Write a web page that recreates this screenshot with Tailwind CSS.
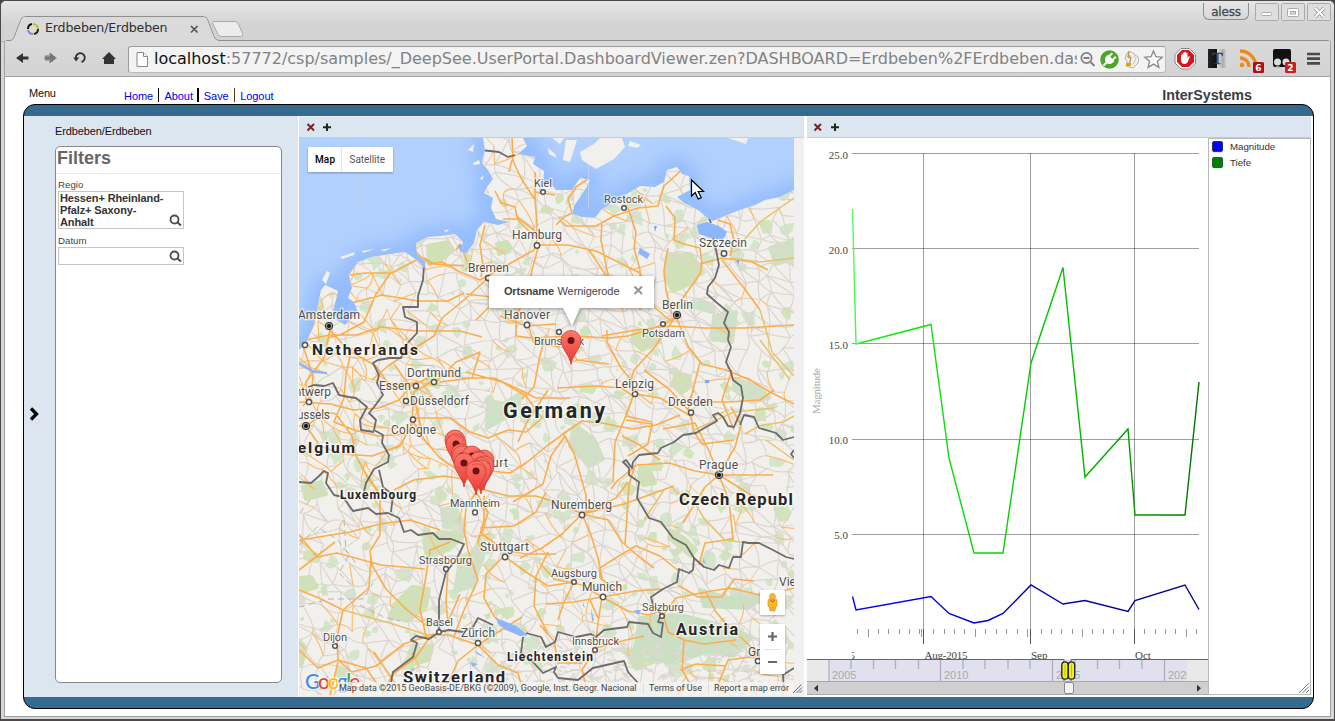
<!DOCTYPE html>
<html lang="de">
<head>
<meta charset="utf-8">
<title>Erdbeben/Erdbeben</title>
<script src="https://cdn.jsdelivr.net/npm/@tailwindcss/browser@4"></script>
</head>
<body class="w-[1335px] h-[721px] overflow-hidden bg-[#444]">
<div class="w-[1335px] h-[721px] flex flex-col bg-[#d6d6d6] border-t border-l border-r border-b-2 border-[#4b4949] rounded-t-md overflow-hidden font-['Liberation_Sans',sans-serif]">
  <!-- title bar with tab -->
  <header class="h-[40px] shrink-0 bg-linear-to-b from-[#e6e6e6] to-[#d3d3d3] to-60% flex justify-between relative">
    <svg class="absolute left-0 top-0" width="1333" height="41" viewBox="1 1 1333 41" fill="none">
      <path d="M1 42h4q0-1.500 2-1.500h3q3 0 4-3l6.500-17q1-4 5-4H203q4 0 5 4l6 16q1.500 4 5 4H1327q4 0 4 3" fill="none" stroke="#8f8f8f"/>
      <path d="M7 42q5 0 7-3l7-18q1-4 4-4H203q3 0 4 3l7 18q2 3 5 3.500z" fill="#dadada"/>
      <path d="M213.500 21.500h21q3 0 4 2.500l4 9.500q1 3-2 3h-19q-3 0-4-3l-4.500-9.500q-1-2.500 .5-2.500z" fill="#ececec" stroke="#a9a9a9"/>
    </svg>
    <div class="relative flex items-center pl-[25px] pt-[15px] h-[40px]">
      <svg width="14" height="14" viewBox="0 0 14 14" fill="none" stroke-width="2"><path d="M7 2A5 5 0 0 1 12 7" stroke="#a7c727"/><path d="M12 7A5 5 0 0 1 8 12" stroke="#222"/><path d="M7 12A5 5 0 0 1 2 8" stroke="#8484c4"/><path d="M2 7A5 5 0 0 1 6 2" stroke="#111"/><circle cx="7" cy="7" r="1.500" fill="#f8df8a"/></svg>
      <span class="ml-[5px] w-[142px] font-['DejaVu_Sans'] text-[12.600px] tracking-[-0.150px] leading-none text-[#2f2f2f] whitespace-nowrap">Erdbeben/Erdbeben</span>
      <svg class="ml-[3px] mt-[1px]" width="9" height="9" viewBox="0 0 9 9"><path d="M1 1l6.500 6.500M7.500 1L1 7.500" stroke="#555" stroke-width="1.700"/></svg>
    </div>
    <div class="relative flex items-start pr-[1px] pt-[2px]">
      <div class="w-[46px] h-[17px] mr-[6px] border border-t-0 border-[#8e8e8e] rounded-b-md text-center text-[12px] leading-[18px] text-[#4a4a4a] [-webkit-text-stroke:0.300px_#4a4a4a] font-['DejaVu_Sans'] tracking-[-0.200px]">aless</div>
      <svg width="78" height="19" viewBox="0 0 78 19" fill="#dedede" stroke="#aaa"><rect x=".5" y=".5" width="23" height="17" rx="1"/><rect x="26.500" y=".5" width="23" height="17" rx="1"/><rect x="52.500" y=".5" width="23" height="17" rx="1"/><rect x="6.500" y="9.500" width="10" height="3" rx="1" fill="#fff"/><rect x="32.500" y="5.500" width="11" height="8" rx="1" fill="#fff"/><rect x="35.500" y="8.500" width="5" height="2.500" fill="#ddd"/><path d="M60 5l9 9M69 5l-9 9" stroke="#999" stroke-width="3.600"/><path d="M60 5l9 9M69 5l-9 9" stroke="#fff" stroke-width="1.800"/></svg>
    </div>
  </header>
  <!-- toolbar -->
  <div class="h-[36px] shrink-0 ml-[3px] mr-[3px] border-l border-r border-b border-[#a3a3a3] bg-linear-to-b from-[#dadada] to-[#d3d3d3] flex items-center relative">
    <svg width="124" height="35" viewBox="5 41 124 35" fill="#333">
      <path d="M16 58l7-5v3.500h5.500v3H23V63z"/>
      <g fill="#8b8b8b"><path d="M57 58l-7-5v3.500h-5.500v3H50V63z"/></g><path d="M46 55v6M48 55v6M50 53v10M52 54v8M54 56v4" stroke="#555" stroke-width=".8"/>
      <path d="M76 59A4.500 4.500 0 1 1 81.500 62" fill="none" stroke="#333" stroke-width="1.900"/><path d="M73.300 57.500h6L76 61.500z"/>
      <path d="M102 59l7-7 7 7h-2v5h-10v-5z"/>
    </svg>
    <div class="w-[1038px] h-[27px] ml-[-1px] mt-[1px] border border-[#9b9b9b] border-b-[#bbb] border-r-[#bbb] rounded-[3px] bg-[#f3f3f3] flex items-center">
      <svg class="ml-[7px] shrink-0" width="13" height="17" viewBox="0 0 13 17" fill="#fff" stroke="#888"><path d="M1 1.500h6.500l4 4v10H1z"/><path d="M7.500 1.500v4h4"/></svg>
      <div class="ml-[5px] w-[923px] shrink-0 overflow-hidden whitespace-nowrap font-['DejaVu_Sans'] text-[16px] tracking-[-0.013px] leading-[24px] text-[#828282]"><span class="text-[#111]">localhost</span>:57772/csp/samples/_DeepSee.UserPortal.DashboardViewer.zen?DASHBOARD=Erdbeben%2FErdbeben.dashboard</div>
      <svg class="shrink-0" width="88" height="24" viewBox="1077 46 88 24" fill="none">
        <circle cx="1086.500" cy="57" r="5.200" stroke="#808080" stroke-width="1.700"/><path d="M1083.500 57h6M1090.500 61l4 4" stroke="#808080" stroke-width="1.900"/>
        <circle cx="1109.500" cy="58.500" r="9.300" fill="#4fa52a"/><g transform="rotate(45 1109.500 58.500)" fill="#fff"><path d="M1105 56h9v3a4.500 4 0 0 1-9 0zM1106 52h2v4h-2zM1111 52h2v4h-2zM1108.500 62h2v5h-2z"/></g>
        <path d="M1127 52q5-3 8 2 5 2 3 8l-5 5-7-2q3-5-1-7z" fill="#f2f0ec" stroke="#b4b0aa"/><path d="M1129 50l-1 6 3 1-2 7" stroke="#b98a44" stroke-width="1.200"/><path d="M1133 55q4 0 2 5l-3 4" stroke="#c9c4bb"/><path d="M1129 54l2 1-2 2zM1126 62h5v3h-5z" fill="#e9a500"/>
        <path d="M1153.500 50l2.400 5.700 6.300.5-4.800 4 1.500 6.200-5.400-3.300-5.400 3.300 1.500-6.200-4.800-4 6.300-.5z" fill="#fbfbfb" stroke="#888" stroke-width="1.300"/>
      </svg>
    </div>
    <svg class="shrink-0" width="160" height="35" viewBox="1166 41 160 35" fill="none">
      <path d="M1181 48.500h8.500l6 6v8.500l-6 6h-8.500l-6-6v-8.500z" fill="#fff" stroke="#888"/><path d="M1182 50h7l5 5v7l-5 5h-7l-5-5v-7z" fill="#d5161c"/><path d="M1181 59v-4q1-1 1.500 0v-2q1-1 1.700 0v-1q1-1 1.700 0v1q1-1 1.600 0v5l1.500-2q1 0 .7 1l-2 5q-1 2-3 2-3 0-3.700-3z" fill="#fff"/>
      <rect x="1208" y="49" width="19" height="19" fill="url(#tg)"/><text x="1217.500" y="64" text-anchor="middle" font-family="Liberation Serif" font-size="17" fill="#666" stroke="#333" stroke-width=".5">T</text>
      <g stroke="#ed8a15" stroke-width="3.300"><path d="M1240 58a9 9 0 0 1 9 9M1240 51a16 16 0 0 1 16 16"/></g><circle cx="1242" cy="65" r="2.300" fill="#ed8a15"/>
      <rect x="1273" y="49" width="18" height="18" rx="2" fill="#111"/><circle cx="1277.500" cy="62" r="3.500" fill="#ddd"/><circle cx="1286" cy="62" r="3.500" fill="#ddd"/><path d="M1274 68q4-4 7 0" fill="#bbb"/>
      <rect x="1253" y="62" width="11" height="11" rx="1.500" fill="#b30d18"/><rect x="1285" y="62" width="11" height="11" rx="1.500" fill="#c82020"/>
      <g font-family="DejaVu Sans" font-weight="bold" font-size="9" fill="#fff" text-anchor="middle"><text x="1258.500" y="71">6</text><text x="1290.500" y="71">2</text></g>
      <path d="M1307 54h13M1307 58.700h13M1307 63.400h13" stroke="#4a4a4a" stroke-width="2.700"/>
      <defs><linearGradient id="tg"><stop offset="0" stop-color="#222"/><stop offset=".45" stop-color="#111"/><stop offset=".5" stop-color="#ddd"/><stop offset=".8" stop-color="#aaa"/><stop offset="1" stop-color="#ddd"/></linearGradient></defs>
    </svg>
  </div>
  <!-- page -->
  <main class="flex-1 mx-[3px] mb-[2px] border-x border-b border-[#a0a0a0] bg-white pl-[18px] pr-[16px] flex flex-col">
    <nav class="h-[27px] shrink-0 flex relative">
      <span class="pl-[6px] pt-[10px] w-[101px] text-[11px] leading-[13px] text-[#111] tracking-[-0.200px]">Menu</span>
      <div class="pt-[9px] flex text-[11px] leading-[20px] tracking-[-0.050px] text-[#0000ee] whitespace-nowrap">
        <span class="w-[34px]">Home</span><i class="w-[1.400px] h-[14px] mt-[2px] mr-[5px] bg-black"></i>
        <span class="w-[33px]">About</span><i class="w-[1.400px] h-[14px] mt-[2px] mr-[5px] bg-black"></i>
        <span class="w-[30px]">Save</span><i class="w-[1.400px] h-[14px] mt-[2px] mr-[5px] bg-[#631]"></i>
        <span>Logout</span>
      </div>
      <span class="ml-auto mr-[62px] pt-[10px] text-[14.300px] leading-[17px] font-bold text-[#3c3c46]">InterSystems</span>
    </nav>
    <section class="w-[1291px] h-[605px] shrink-0 rounded-xl border border-black bg-[#356b8e] pt-[11px] pb-[12px] flex flex-col overflow-hidden">
      <div class="flex-1 flex bg-[#dce6f1]">
        <!-- filters -->
        <aside class="w-[275px] h-[581px] shrink-0 flex border-r border-white">
          <div class="w-[31px] flex items-center pt-[15px] pl-[5px]"><svg width="11" height="14" viewBox="0 0 11 14"><path d="M2 1.500l5.500 5.500L2 12.500" fill="none" stroke="#000" stroke-width="3.300"/></svg></div>
          <div class="w-[227px] flex flex-col">
            <h1 class="h-[30px] pt-[9px] text-[11px] leading-[13px] tracking-[-0.120px] text-[#111]">Erdbeben/Erdbeben</h1>
            <div class="h-[537px] bg-white border border-[#888] rounded-[5px] text-[#444]">
              <h2 class="h-[27px] pl-[1px] border-b border-[#e8e8e8] text-[18px] leading-[23px] font-bold text-[#666]">Filters</h2>
              <p class="ml-[2px] mt-[5px] h-[12px] text-[9.700px] leading-[12px] whitespace-nowrap">Regio</p>
              <div class="ml-[2px] mt-0 w-[126px] h-[38px] border border-[#c6c6c6] flex justify-between items-end">
                <p class="pl-px w-[112px] h-[36px] text-[11px] leading-[12px] tracking-[-0.120px] font-bold text-[#333] whitespace-nowrap">Hessen+ Rheinland-<br>Pfalz+ Saxony-<br>Anhalt</p>
                <svg class="shrink-0 mr-[1px] mb-[1px] -ml-[8px]" width="13" height="13" viewBox="0 0 13 13" fill="none" stroke="#4c4c4c"><circle cx="5.500" cy="5.500" r="4" stroke-width="1.800"/><path d="M8.500 8.500l3.500 3" stroke-width="2"/></svg>
              </div>
              <p class="ml-[2px] mt-[6px] h-[12px] text-[9.700px] leading-[12px]">Datum</p>
              <div class="ml-[2px] w-[126px] h-[18px] border border-[#c6c6c6] flex justify-end items-center">
                <svg class="mr-[1px]" width="13" height="13" viewBox="0 0 13 13" fill="none" stroke="#4c4c4c"><circle cx="5.500" cy="5.500" r="4" stroke-width="1.800"/><path d="M8.500 8.500l3.500 3" stroke-width="2"/></svg>
              </div>
            </div>
          </div>
        </aside>
        <!-- map -->
        <section class="w-[505px] h-[581px] shrink-0 flex flex-col bg-[#f0f0f0]">
          <div class="h-[22px] shrink-0 bg-[#dce6f1] border-t border-t-[#eee] border-b border-b-[#c9cdd2] flex items-center pl-[7px]">
            <svg width="26" height="10" viewBox="0 0 26 10"><path d="M1.500 2l6.500 6.500M8 2L1.500 8.500" stroke="#7d2020" stroke-width="2"/><path d="M17 5.300h8M21 1.500v7.500" stroke="#1b2b14" stroke-width="2"/></svg>
          </div>
          <svg id="map" class="block shrink-0" width="505" height="557" viewBox="299 138 505 557">
            <defs>
              <path id="land" d="M299 350L306 343 314 325 318 305 321 290 325 285 332 288 338 291 336 300 333 310 337 320 345 325 352 318 358 312 354 302 348 298 352 288 349 275 358 262 372 257 390 254 405 252 417 260 424 268 426 262 417 254 416 243 428 237 440 236 455 234 463 242 462 252 466 254 474 243 477 230 484 222 498 225 510 222 496 219 491 208 493 198 484 193 487 187 493 179 488 170 482 163 485 150 483 138 523 138 527 146 518 154 535 157 533 164 544 171 543 184 549 182 556 190 572 190 580 178 590 180 586 188 574 206 572 214 582 217 595 218 601 210 622 197 640 186 655 187 664 182 667 170 677 167 682 174 689 176 690 190 677 197 684 203 698 210 706 217 713 221 722 217 740 210 755 205 765 200 780 197 794 190V695H299z"/>
              <clipPath id="lc"><use href="#land"/></clipPath>
              <clipPath id="mc"><rect x="299" y="138" width="495" height="557"/></clipPath>
              <filter id="soft" x="-5%" y="-5%" width="110%" height="110%"><feGaussianBlur stdDeviation="9"/></filter>
              <filter id="tile"><feGaussianBlur stdDeviation=".45"/></filter>
              <linearGradient id="pin" x2="0" y2="1"><stop offset="0" stop-color="#ff776b"/><stop offset="1" stop-color="#e8382f"/></linearGradient>
              <g id="mk"><path d="M0 0C-1-9-10-16-10-24A10 10 0 0 1 10-24C10-16 1-9 0 0z" fill="url(#pin)" stroke="#c5413a" stroke-width=".8"/><circle cy="-24" r="3.500" fill="#6b1410"/></g>
            </defs>
            <g clip-path="url(#mc)">
            <rect x="299" y="138" width="495" height="557" fill="#b1d0fe"/>
            <use href="#land" fill="none" stroke="#7faefb" stroke-width="20" opacity=".6" filter="url(#soft)"/>
            <path d="M358.500 138v70M588.500 138v70" stroke="#bdd2ee"/>
            <use href="#land" fill="#f2f0ec"/>
            <g fill="#f2f0ec">
              <path d="M580 152l14-8 6-6h22l3 9-11 12-18 10-14-9zM563 160l3-20h11l-7 22zM548 148l7 6 2 4-8-4zM630 141l11 4-4 3-9-2zM728 138h20l-2 6zM322 280l5-9 3 2-4 11zM340 257l15-5-1 3-12 4zM362 251l12-2-11 4zM380 250l11-2-6 3zM468 150l6-6-1 8zM473 163l6-3 1 4-6 1zM480 178l4-2-2 4zM421 234l11-2M443 231l6-2-2 3zM552 138h12l-4 6z"/>
            </g>
            <g clip-path="url(#lc)"><g filter="url(#tile)">
              <g id="woods"></g>
              <g fill="#cfe2b4" stroke="#cfe2b4" stroke-width="4" stroke-linejoin="round">
                <path d="M667 256l24-2 8 12-4 16-22 9-8-14zM634 331l18 3 8 8-18 8-10-9zM677 373l12 3 2 10-9 7-10-8zM640 467l10 4 5 12-12 2-4-8zM670 530l14 8 12 12-5 6-22-18zM394 605l18-18 17 2-3 18-18 14-18-4zM424 540l16-8 24 3-14 14-23 8zM299 578l12-1 6 10-14 4zM303 487l18-5 5 12-20 5zM428 246l20-4 5 8-12 10-12 4zM497 244l10-2 4 6-12 6zM299 640l7 8-5 18zM624 649l20 2 14-6-2 16-20 8zM410 652l22-6-4 14-14 4z"/>
              </g>
              <g fill="#cfe2c6" stroke="#cfe2c6" stroke-width="4" stroke-linejoin="round">
                <path d="M735 379l24 8 10 11-18 4-18-13zM574 425l20 14 9 20-13 7-20-20zM488 400l15 4 20-12-8 20-28 16zM460 560l14-8 6-15 3 20-10 28-18 7zM714 316l22-4-4 30-20-3zM770 248l24-8v18l-18 6zM700 300l10 4 3 8-16-4zM590 280l18-4 8 10-18 6zM442 510l14-4 4 15-16 6z"/>
                <path d="M640 618l40-3 40 10 32 12-18 18-32-2-28 10-40-8zM700 590l28 8 40-4-20 14-44-2z" fill="#c9e0c2" stroke="#c9e0c2"/>
              </g>
              <g id="relief" stroke="#dcdbd6" stroke-width="2" fill="none"></g>
              <g id="minor" fill="none" stroke="#dcd6ce" stroke-width="1.200"></g>
              <g id="local" fill="none" stroke="#fdbb66" stroke-width="1.100"></g>
              <g fill="none" stroke="#fcad4d" stroke-width="1.600" stroke-linejoin="round">
                <path d="M512 138l1 23 8 17 14 22 2 24 0 16-3 10-32 18-22 12-20-8-18-10-12 2-12-10-7-8M512 160l-3 12M495 191l6 12 14 4 2 10 18 14M503 219l14 0 18 18M485 225l-5 20 3 20-2 12M456 250l4-6 9 22-4 4"/>
                <path d="M535 200v-28M535 192l20 3M556 225l8-8 8-4-4-14 8-12 12-8M560 220l6 6 30 0 18-10 24-8 20-2 6-20 20-18M615 140l2 14-20 10-8 4M610 155l7 18M538 245l30 0 28 6 24 12 20 10 8 18 4 14 16 14 8 0M628 208l8 24-2 16 6 22 0 40M666 206l9 12-1 22 10 4 16 4 2 16-2 10-20 28M602 222l-1 18 8 40-20-30M700 264l22-6 30 4 16 8M722 260l22 28 16 22"/>
                <path d="M718 220l12 4 4 16-4 16M668 248l-4 22 2 20 6 24M538 248l-6 22-4 24-12 22 0 20 16 2 40-2 36 2 20-2 26-8 18-8M500 316l26 10 30-2M488 278l-24 22-22 18-8 18-16 10-30 20-16 14M466 294l34 4 30-12M488 280l8 20-20 20M296 315l32 4 24-16 30-8 36 6 30 0 16-8M350 275l16-2 26 0 26-14M424 258l10 6 30 2M390 274l-14 20-12 28-22 12-14 4M300 341l30-6 26 0 26-8 34 4 44 0 22 6"/>
                <path d="M315 322l-12 24 10 30-2 20-8 10M330 330l-6 28-18 24 0 18M330 330l18 20 28 16 14 20 30-4 16-8 28 4 30 0 22 10 20 10 34 0M352 348l-6 26-2 24-10 24 20 8 24 6 30-2M299 402l32 2 22 6 26-2 20-8 14-16M306 426l20-14 10 2 16 22 4 20 10 18 14 20M306 426l14 20 22 8 30 2 28-10 12-22M394 364l14 20 8 22 4 20M434 380l-20 12-2 28 14 22 14 16 24 16 14 8M436 382l20-20 24-10-8 26-32 4M416 418l34 0 20 14 18 6 20-8 18 2 16-14-16-22-24-14-36-10"/>
                <path d="M546 335l-6 20-6 32-12 12M571 350l6 10 32 4M528 325l6 18 26 4M607 330l0 12 14 26 12 14M602 336l34-6 34-4 34 2 40 0 50-3M557 388l40-2 24 2 12 8-8 22-10 24-2 40M636 394l24 4 24 14 6 4M634 394l-8 22 26 6M548 445l14-10 20-14 20 2 30 6 24-4 24-10M548 445l-22 18-16 10-20-2M564 435l10 18 12 42 0 16M565 436l-14 20-8 28-30 18M548 390l-20 30-10 22M626 420l26 4-4 20-20 12M690 412l4 20 8 12 32-4M690 412l-20-22-26-20M676 316l12 30 12 16-6 24-6 24M676 316l-22 32-20 22-4 14M688 346l14 18 24 6 24 10 20 12 24 12M694 390l-6 12 40 0 32-2 14-10M732 370l-10 30 12 30"/>
                <path d="M719 475l-24-4-26-8-32 2-20 16-6 8M719 475l-14 12-22 36M719 475l54 0M719 475l16-28 6-22-10-18M719 475l-10-24-14-28-32 6M719 475l10 26 4 38-28 4-6 22M719 475l32 20 26 8M660 460l-22-16-16-8M582 514l-20-10-26-8-28 0-30-8M582 514l8 18 8 26 4 20M582 514l26 6 14 22 16 14 16 12M582 514l34-16 12-16M582 514l-20 20-20 14-22 10M582 514l42-10 50-18M625 545l4-60 6-20M600 578l0-10 22-14 14-8 24 10 20 16"/>
                <path d="M476 492l-10 16-2 22 4 20 10 30-14 30-10 26M476 492l12 20-6 22 22 16 22 4 30 0M484 496l0 24-6 22 4 8M504 556l-18 18-2 24 10 18 12 14M504 556l22 16 22 14 26-4M546 492l-10 20-22 14-34 2M470 480l-26-4-30 4-20 10M440 530l-30-10-30 4-30 8-50 8M380 535l0-40-14-20M380 535l-10 16 2 14 14 24 20 20 22 18M299 535l18 22 20-4 44 12 44 4M299 570l18-14 18-14M343 610l-24-12-20-8M343 610l26-22 2-32M343 610l-6 28 1 22 14 12 24-6 28-22 30-10M338 660l-20 8-19-18M338 660l28 8 14 20M338 662l-8 33M374 652l20 30 10 13M426 636l-6-26 6-34 4-26 20-8M448 568l-2 34 2 20 12-28M478 645l-30-10-20 0M478 645l-20 16-12 26M478 645l28-18 16-10M430 637l-14 20-24 18-10 20M478 645l20 20 20 8 6 22"/>
                <path d="M548 552l-12 24-2 30 14 28M574 582l-10 20-6 18M602 597l-20-12-28-6-14-16M602 597l-4 26-2 18M602 597l26 14 20 4 14-4M602 597l34-6 26-2M602 597l-28 5-28 2M600 578l16 12M590 600l8 18M662 610l6 22 16 8-2 30 8 14-14 11M664 614l12-16 30-6 24-4 34 8 30-8M678 585l20 12 24 0 12-18 20 2M684 640l20 4 32-4M706 592l10 20 12 14 20 18 12 12M596 648l30-8 18-4M596 648l-14 22 6 25M758 656l-30 4-12 30M540 625l14 16 4 22 24 0M680 670l16-6 30 2"/>
              </g>
              <g fill="none" stroke="#e7c36a" stroke-width="1.500"><path d="M744 240l16-18 34-24M730 258l30 4 34-4M760 310l6 20 6 22 22 24M745 434l14-8 24-4 11-6M766 440l28 20M694 430l40-18 40-4M760 340l30 40M299 540l22 18M343 610l50 14 44 14M687 490l18 30 20 20 30 4M664 490l-20 30"/></g>
              <g fill="none" stroke="#6c6c6c" stroke-width="1.800" stroke-linejoin="round">
                <!-- north and west -->
                <path d="M481 150L499 152 508 157 515 155M424 265L423 280 418 296 418 307 403 307 405 317 417 322 417 333 406 345 401 358 390 358 378 360 373 363 379 375 377 383 383 395 374 407 369 413 376 420 374 430 383 435 382 443 389 455 388 462 374 469 366 483 364 492M308 387L314 385 324 386 333 383 339 395 349 397 356 398 367 407 360 420 361 430 374 432"/>
                <path d="M379 470L383 487 393 495 391 512M299 482L311 483 318 477 324 471 328 473 326 483 334 495 343 497 353 511 368 508 376 514 388 513 399 518 404 532 411 530 418 535 433 533 439 539 451 539 464 544 456 560 446 572 439 600 439 617 439 632 429 639 416 636 411 640 417 643 413 657 393 672 391 682"/>
                <!-- alps -->
                <path d="M439 632L449 630 463 632 473 627 478 618 493 625M523 637L521 653 533 662 543 673 556 667 554 672 558 678 578 680 593 668 624 661 628 672 638 683M526 633L541 637 546 647 555 642 558 632 576 637 591 634 596 637 604 630 627 627 629 622 648 624 653 633 661 637 663 623 658 622 661 614 653 605 651 597 663 589 677 582 679 569 689 573 693 570 694 558M794 668L783 675 784 690"/>
                <!-- east -->
                <path d="M709 218L711 223M712 234L716 250 719 265 715 278 708 287 707 294 716 302 728 312 724 323 729 332 728 340 731 347 726 362 731 372 733 380 741 386 743 398 740 413 734 427 728 426 723 417 718 413 713 415 717 421 706 427 696 433 683 435 674 442 661 448 658 453 639 455 633 462 632 468 626 460 623 462 629 468 629 475 639 482 637 498 649 518 661 522 673 538 686 545 694 558 704 567 714 570 719 565 729 568 733 557 741 557 743 542 749 543 759 543 773 550 786 557 794 559M740 425L744 415 754 417 759 428 776 433 783 440 794 437M794 450L791 454 794 458"/>
                <path d="M299 545l18-18 20 12 12 16-10 18 14 14M299 607l30-8 34 0 10-16M360 605l24 12 16 4M320 690l10-18M344 520l2 30 12 16M310 500l-11 14" stroke="#b5b5b2" stroke-dasharray="6 4" stroke-width="1"/>
              </g>
              <g fill="#8bb6fc"><path d="M496 618l8 3 12 5 12 9-8 1-14-6-8-6zM409 671l5-4-2 6zM474 650l12 8-9-4zM470 662l8 2-5 3zM697 225l10-3 12 4 8 6-4 8-12-2-12-4zM640 248l10 6-3 5-9-6zM591 608l3 12 -2 2zM583 602l2 6-2-2zM634 610h7l-3 5zM703 558l3 6-3-2zM458 246l5-2 7-1-3 10-6-1zM299 362l14 8 14 2v2l-14-1-14-8z"/></g>
              <path d="M736 261l3-1v5zM654 226l3 0-2 6zM705 380h4v3h-4zM360 365l6 0M299 365l20 10" fill="#75a9fb"/>
            </g></g>
            <g fill="#fff" stroke="#555" stroke-width="1.500">
              <circle cx="543" cy="192" r="2.300"/><circle cx="624" cy="208" r="2.300"/><circle cx="537" cy="245.500" r="2.700"/><circle cx="724" cy="253.500" r="2.700"/><circle cx="488" cy="278" r="2.500"/><circle cx="527" cy="325" r="2.700"/><circle cx="559" cy="332" r="2.400"/><circle cx="663" cy="324" r="2.300"/><circle cx="305" cy="345" r="2.600"/><circle cx="434" cy="382" r="2.600"/><circle cx="416" cy="386" r="2.600"/><circle cx="406" cy="401" r="2.600"/><circle cx="413" cy="419.500" r="2.600"/><circle cx="309" cy="402" r="2.600"/><circle cx="635" cy="394" r="2.600"/><circle cx="691" cy="412.500" r="2.600"/><circle cx="582" cy="515" r="2.700"/><circle cx="475" cy="512.500" r="2.400"/><circle cx="505" cy="557" r="2.700"/><circle cx="446" cy="569" r="2.400"/><circle cx="574" cy="582" r="2.300"/><circle cx="603" cy="597" r="2.700"/><circle cx="662" cy="616" r="2.300"/><circle cx="439" cy="632" r="2.300"/><circle cx="478" cy="643" r="2.600"/><circle cx="335" cy="646" r="2.300"/><circle cx="595" cy="650" r="2.300"/><circle cx="758" cy="661" r="2.600"/>
              <g stroke="#333" stroke-width="1" fill="#999"><circle cx="329" cy="326" r="3.700"/><circle cx="306" cy="426" r="3.700"/><circle cx="677" cy="315" r="3.700"/><circle cx="719" cy="475" r="3.700"/></g>
              <g stroke="none" fill="#111"><circle cx="329" cy="326" r="2"/><circle cx="306" cy="426" r="2"/><circle cx="677" cy="315" r="2"/><circle cx="719" cy="475" r="2"/></g>
            </g>
            <g font-family="Roboto" font-size="12" fill="#505050" stroke="#fff" stroke-width="2.500" stroke-opacity=".6" paint-order="stroke">
              <text x="534" y="187" textLength="18" font-size="11">Kiel</text><text x="604" y="203" textLength="39" font-size="11">Rostock</text><text x="512" y="239" textLength="50">Hamburg</text><text x="699" y="247" textLength="48">Szczecin</text><text x="468" y="272" textLength="41">Bremen</text><text x="298" y="319" textLength="62">Amsterdam</text><text x="504" y="319" textLength="46">Hanover</text><text x="662" y="309" textLength="31">Berlin</text><text x="642" y="337" textLength="43" font-size="11">Potsdam</text><text x="534" y="345" textLength="50" font-size="11">Brunswick</text><text x="407" y="377" textLength="54">Dortmund</text><text x="379" y="390" textLength="32">Essen</text><text x="410" y="405" textLength="59">Düsseldorf</text><text x="391" y="434" textLength="45">Cologne</text><text x="287" y="396" textLength="44">Antwerp</text><text x="286" y="419" textLength="44">Brussels</text><text x="615" y="388" textLength="39">Leipzig</text><text x="668" y="406" textLength="45">Dresden</text><text x="455" y="467" textLength="53">Frankfurt</text><text x="699" y="469" textLength="39">Prague</text><text x="450" y="507" textLength="50" font-size="11">Mannheim</text><text x="551" y="509" textLength="61">Nuremberg</text><text x="480" y="551" textLength="49">Stuttgart</text><text x="419" y="564" textLength="53" font-size="11">Strasbourg</text><text x="551" y="577" textLength="46" font-size="11">Augsburg</text><text x="582" y="591" textLength="40">Munich</text><text x="642" y="611" textLength="42" font-size="11">Salzburg</text><text x="426" y="626" textLength="27" font-size="11">Basel</text><text x="461" y="637" textLength="34">Zürich</text><text x="323" y="641" textLength="24" font-size="11">Dijon</text><text x="572" y="645" textLength="47" font-size="11">Innsbruck</text><text x="779" y="586">Vienna</text><text x="748" y="656">Graz</text>
            </g>
            <g font-family="Roboto" font-weight="bold" fill="#262626" stroke="#fff" stroke-width="3" stroke-opacity=".6" paint-order="stroke">
              <text x="503" y="418" font-size="21.500" textLength="102">Germany</text><text x="312" y="355" font-size="15.500" textLength="106">Netherlands</text><text x="286" y="453" font-size="15.500" textLength="69">Belgium</text><text x="340" y="499" font-size="12" textLength="76">Luxembourg</text><text x="679" y="505" font-size="16.500" textLength="129">Czech Republic</text><text x="676" y="635" font-size="16" textLength="62">Austria</text><text x="507" y="661" font-size="12" textLength="86">Liechtenstein</text><text x="403" y="683" font-size="16.500" textLength="102">Switzerland</text>
            </g>
            <g><use href="#mk" x="455" y="464"/><use href="#mk" x="456" y="468"/><use href="#mk" x="461" y="478"/><use href="#mk" x="462" y="480"/><use href="#mk" x="472" y="480"/><use href="#mk" x="484" y="484"/><use href="#mk" x="479" y="486"/><use href="#mk" x="464" y="487"/><use href="#mk" x="484" y="490"/><use href="#mk" x="481" y="494"/><use href="#mk" x="476" y="495"/><use href="#mk" x="571" y="364.500"/></g>
            <path d="M455 436A10 10 0 0 1 464 441M473 452A10 10 0 0 1 484 453M474 460A10 10 0 0 1 490 464M472 465A10 10 0 0 1 486 470" fill="none" stroke="#c5413a" stroke-width=".7"/>
            <g filter="drop-shadow(0 1px 2px rgba(0,0,0,.4))"><path d="M489 276H654V308H580L572 326 563 308H489z" fill="#fff"/></g>
            <g font-family="Liberation Sans" font-size="11" fill="#444"><text x="504" y="295" font-weight="bold" textLength="50">Ortsname</text><text x="557.500" y="295" textLength="62">Wernigerode</text></g>
            <path d="M634.500 286.500l7.500 7.500M642 286.500l-7.500 7.500" stroke="#999" stroke-width="2.200"/>
            <g filter="drop-shadow(0 1px 1px rgba(0,0,0,.3))" fill="#fff"><rect x="308" y="147" width="85" height="25" rx="1"/><rect x="760" y="590" width="25" height="25" rx="1"/><rect x="760" y="624" width="25" height="50" rx="1"/></g>
            <path d="M341.500 147v25M764 649.500h17" stroke="#e5e5e5"/>
            <g font-family="Roboto" font-size="10"><text x="315" y="163" font-weight="500" textLength="20">Map</text><text x="349.500" y="163" fill="#565656" textLength="35.500">Satellite</text></g>
            <path d="M768 636.500h9M772.500 632v9M768 662h9" stroke="#666" stroke-width="2.200"/>
            <g fill="#fbb829" stroke="#d68f1b" stroke-width=".7"><path d="M768 601q0-2 2-2h5q2 0 2 2v5l-1.500 1-.5 4h-1.800l-.7-4-.7 4h-1.800l-.5-4-1.500-1z"/><circle cx="772.500" cy="596.500" r="2.900"/></g><path d="M770.500 600l2 2 2-2" stroke="#c04010" fill="none"/>
            <g font-family="Lato" font-size="20.500" font-weight="500" stroke="#fff" stroke-width="2" stroke-opacity=".7" paint-order="stroke"><text x="305" y="689" textLength="55"><tspan fill="#4285f4">G</tspan><tspan fill="#ea4335">o</tspan><tspan fill="#fbbc05">o</tspan><tspan fill="#4285f4">g</tspan><tspan fill="#34a853">l</tspan><tspan fill="#ea4335">e</tspan></text></g>
            <rect x="338" y="682" width="456" height="13" fill="#f5f5f5" opacity=".75"/>
            <g font-family="Roboto" font-size="9" fill="#444"><text x="339" y="691" textLength="297.500">Map data ©2015 GeoBasis-DE/BKG (©2009), Google, Inst. Geogr. Nacional</text><text x="649" y="691" textLength="53">Terms of Use</text><text x="714" y="691" textLength="75">Report a map error</text></g>
            <path d="M643.500 683v11M708.500 683v11" stroke="#ddd"/>
            </g>
            <path d="M793 693L801.500 684.500M796.500 693L802 687.500M799.500 693L802 690.500" stroke="#666"/>
            <path d="M691.500 180v16l3.700-3.500 3 6.500 3-1.400-3-6.100h5.300z" fill="#fff" stroke="#000" stroke-width="1.200"/>
          </svg>
        </section>
        <!-- chart -->
        <section class="w-[510px] h-[581px] shrink-0 border-l-[3px] border-white flex flex-col bg-white">
          <div class="h-[22px] shrink-0 w-[504px] bg-[#dce6f1] border-t border-t-[#eee] border-b border-b-[#c9cdd2] flex items-center pl-[6px]">
            <svg width="27" height="10" viewBox="0 0 27 10"><path d="M1.500 2l6.500 6.500M8 2L1.500 8.500" stroke="#7d2020" stroke-width="2"/><path d="M18 5.300h8M22 1.500v7.500" stroke="#1b2b14" stroke-width="2"/></svg>
          </div>
          <div class="flex w-[504px] h-[557px]">
            <svg class="shrink-0" width="401" height="557" viewBox="807 138 401 557">
              <defs>
                <linearGradient id="gg" gradientUnits="userSpaceOnUse" x1="852" x2="1199" y1="0" y2="0"><stop offset="0" stop-color="#5f6"/><stop offset=".03" stop-color="#10f410"/><stop offset=".6" stop-color="#00c400"/><stop offset="1" stop-color="#007400"/></linearGradient>
                <linearGradient id="bg" gradientUnits="userSpaceOnUse" x1="852" x2="1199" y1="0" y2="0"><stop offset="0" stop-color="#00f"/><stop offset="1" stop-color="#00008c"/></linearGradient>
                <clipPath id="ax"><rect x="852" y="645" width="356" height="14"/></clipPath><clipPath id="nv"><rect x="807" y="660" width="380" height="22"/></clipPath>
                <g id="hd"><rect x="-3.200" y="-8.700" width="6.400" height="17.400" rx="3.200" fill="#f2ee20" stroke="#222" stroke-width="1.300"/><path d="M0-6V6" stroke="#b8b400" stroke-width=".8"/></g>
              </defs>
              <path d="M852 153.500h347M852 248.500h347M852 343.500h347M852 439.500h347M852 534.500h347M923.500 153v491M1030.500 153v491M1134.500 153v491" stroke="#000" stroke-opacity=".38" fill="none"/>
              <path d="M923.500 629v15M1030.500 629v15M1134.500 629v15" stroke="#555"/>
              <path d="M857.500 629v5M868.500 629v8M878.500 629v5M888.500 629v5M899.500 629v5M909.500 629v5M919.500 629v5M921.500 629v8M933.500 629v5M944.500 629v5M954.500 629v5M964.500 629v5M975.500 629v8M985.500 629v5M996.500 629v5M1006.500 629v5M1017.500 629v5M1027.500 629v8M1041.500 629v5M1051.500 629v5M1061.500 629v5M1072.500 629v5M1082.500 629v8M1092.500 629v5M1103.500 629v5M1113.500 629v5M1123.500 629v5M1144.500 629v5M1155.500 629v5M1165.500 629v5M1175.500 629v5M1186.500 629v8M1196.500 629v5" stroke="#999"/>
              <path d="M852.500 209L856 344 931 324.500 949 458 974 553H1003L1031 363 1063 267.500 1085 477 1128 429 1135 515H1185L1199 382" fill="none" stroke="url(#gg)" stroke-width="1.400"/>
              <path d="M852.500 596.500L856 610 931 596.500 949 613.500 974 623 988 620.500 1003 613.500 1031 585 1063 604 1085 600.500 1128 611.500 1135 600.500 1185 585 1199 609.500" fill="none" stroke="url(#bg)" stroke-width="1.400"/>
              <g font-family="Liberation Serif" font-size="11" fill="#444"><g text-anchor="end"><text x="848" y="159">25.0</text><text x="848" y="254">20.0</text><text x="848" y="349">15.0</text><text x="848" y="444">10.0</text><text x="848" y="539">5.0</text></g><text transform="rotate(-90 820 414)" x="820" y="414" fill="#aaa" textLength="46">Magnitude</text><g clip-path="url(#ax)"><text x="849.500" y="659">5</text><text x="924.500" y="659" textLength="43">Aug-2015</text><text x="1031" y="659">Sep</text><text x="1135" y="659">Oct</text></g></g>
              <rect x="807" y="659" width="401" height="23" fill="#e9e9e9"/><rect x="829" y="660" width="358" height="22" fill="#e1e0ee"/>
              <path d="M829 660v22M940.500 660v22M1052.500 660v22M1164.500 660v22M851 660v9M873.500 660v9M895.500 660v9M918.500 660v9M963 660v9M985 660v9M1008 660v9M1030 660v9M1075 660v9M1097.500 660v9M1119.500 660v9M1142 660v9" stroke="#b0b0bd" stroke-width="1.300"/>
              <g clip-path="url(#nv)" font-family="Liberation Sans" font-size="11" fill="#aaa" stroke="none"><text x="832" y="679">2005</text><text x="944" y="679">2010</text><text x="1056" y="679">2015</text><text x="1168" y="679">2020</text></g>
              <path d="M807 659.500h257v22M1208 659.500h-137v22" stroke="#5a5ab0" fill="none"/>
              <rect x="807" y="681.500" width="401" height="13" fill="#cfcfcf"/><path d="M807 681.500h401M807 694.500h401" stroke="#aaa"/>
              <use href="#hd" x="1065" y="670.500"/><use href="#hd" x="1071.500" y="670.500"/>
              <rect x="1064.500" y="682.500" width="9" height="11" rx="1.500" fill="#f4f4f4" stroke="#888"/>
              <path d="M814 688.300l4-3.500v7zM1201 688.300l-4-3.500v7z" fill="#333"/>
            </svg>
            <div class="flex-1 border border-[#b9b9b9] flex flex-col justify-between">
              <ul class="pt-[2px] pl-[3px] flex flex-col gap-[5px] text-[9.700px] leading-[11px] text-[#333]">
                <li class="flex items-center"><i class="w-[11px] h-[11px] mr-[7px] rounded-[2px] border border-[#335] bg-[#0000ff] shadow"></i>Magnitude</li>
                <li class="flex items-center"><i class="w-[11px] h-[11px] mr-[7px] rounded-[2px] border border-[#354] bg-[#008000] shadow"></i>Tiefe</li>
              </ul>
              <svg class="self-end" width="12" height="12" viewBox="0 0 12 12"><path d="M1 11L11 1M4.500 11L11 4.500M8 11l3-3" stroke="#777"/></svg>
            </div>
          </div>
        </section>
      </div>
    </section>
  </main>
</div>
<script>
// Fine road mesh, forest patches and alpine shading for the base map
(function () {
  var seed = 11;
  function r() { seed = (seed * 16807) % 2147483647; return seed / 2147483647; }
  var step = 15, cols = 36, rows = 40, p = [], i, j;
  for (j = 0; j < rows; j++) { p[j] = []; for (i = 0; i < cols; i++) p[j][i] = [292 + i * step + (r() - .5) * 15, 130 + j * step + (r() - .5) * 15]; }
  function seg(a, b) { return 'M' + a[0].toFixed(1) + ' ' + a[1].toFixed(1) + 'Q' + ((a[0] + b[0]) / 2 + (r() - .5) * 8).toFixed(1) + ' ' + ((a[1] + b[1]) / 2 + (r() - .5) * 8).toFixed(1) + ' ' + b[0].toFixed(1) + ' ' + b[1].toFixed(1); }
  var grey = '', orange = '';
  for (j = 0; j < rows - 1; j++) for (i = 0; i < cols - 1; i++) {
    var a = p[j][i], dense = (a[0] < 440 && a[1] > 260 && a[1] < 470) ? .3 : .05;
    [p[j][i + 1], p[j + 1][i], p[j + 1][i + 1]].forEach(function (b, k) {
      var q = r();
      if (q < dense) orange += seg(a, b); else if (q < (k == 2 ? .5 : .85)) grey += seg(a, b);
    });
  }
  document.getElementById('minor').innerHTML = '<path d="' + grey + '"/>';
  document.getElementById('local').innerHTML = '<path d="' + orange + '"/>';
  var woods = '', k, n;
  for (k = 0; k < 420; k++) {
    var x = 299 + r() * 495, y = 190 + r() * 505, w = 2 + r() * 8, d = '';
    for (n = 0; n < 7; n++) { var t = n * .9, s = w * (.4 + r() * .8); d += (n ? 'L' : 'M') + (x + Math.cos(t) * s).toFixed(1) + ' ' + (y + Math.sin(t) * s).toFixed(1); }
    woods += '<path d="' + d + 'z" fill="' + (r() < .3 ? '#d2e4ba' : '#d3e5cb') + '"/>';
  }
  document.getElementById('woods').innerHTML = woods;
  var relief = '';
  for (k = 0; k < 260; k++) { var u = 480 + r() * 280, v = 645 + r() * 50; relief += 'M' + u.toFixed(1) + ' ' + v.toFixed(1) + 'l' + (3 + r() * 5).toFixed(1) + ' ' + (-5 + r() * 9).toFixed(1); }
  document.getElementById('relief').innerHTML = '<path d="' + relief + '"/>';
})();
</script>
</body>
</html>
